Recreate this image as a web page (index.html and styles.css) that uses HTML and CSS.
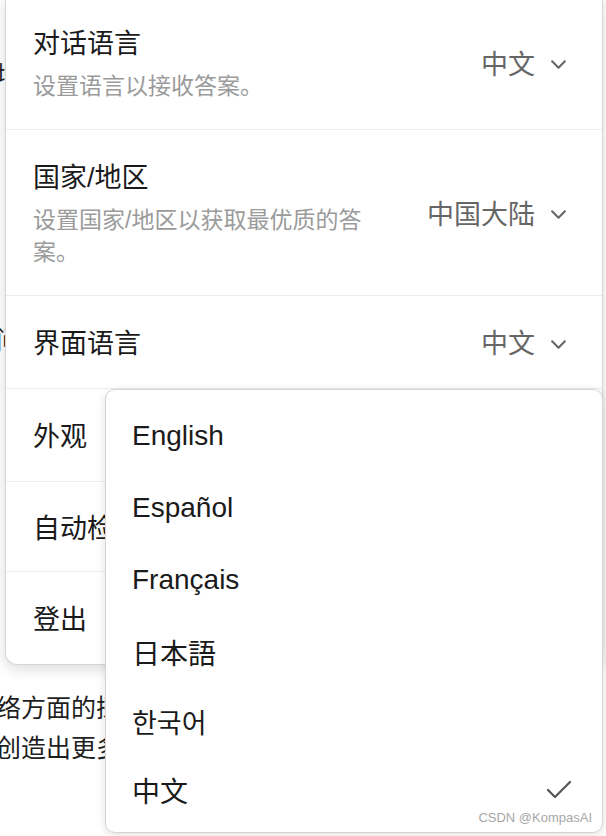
FILE: index.html
```html
<!DOCTYPE html>
<html lang="zh-CN">
<head>
    <meta charset="UTF-8">
    <title>设置</title>
    <link rel="stylesheet" href="styles.css">
</head>
<body>
    <div class="page">
        <div class="article">
            <p class="frag frag-top">增</p>
            <p class="frag frag-mid">问</p>
            <p class="lines">络方面的探索和研究，<br>创造出更多更好的内容。</p>
        </div>

        <div class="settings">
            <div class="row">
                <div class="row-text">
                    <div class="row-title">对话语言</div>
                    <div class="row-desc">设置语言以接收答案。</div>
                </div>
                <div class="row-value">中文
                    <svg class="chevron" viewBox="0 0 16 10"><path d="M2 2l6 6 6-6"/></svg>
                </div>
            </div>
            <div class="row">
                <div class="row-text">
                    <div class="row-title">国家/地区</div>
                    <div class="row-desc">设置国家/地区以获取最优质的答案。</div>
                </div>
                <div class="row-value">中国大陆
                    <svg class="chevron" viewBox="0 0 16 10"><path d="M2 2l6 6 6-6"/></svg>
                </div>
            </div>
            <div class="row">
                <div class="row-text">
                    <div class="row-title">界面语言</div>
                </div>
                <div class="row-value">中文
                    <svg class="chevron" viewBox="0 0 16 10"><path d="M2 2l6 6 6-6"/></svg>
                </div>
            </div>
            <div class="row">
                <div class="row-text">
                    <div class="row-title">外观</div>
                </div>
            </div>
            <div class="row row-short">
                <div class="row-text">
                    <div class="row-title">自动检测</div>
                </div>
            </div>
            <div class="row">
                <div class="row-text">
                    <div class="row-title">登出</div>
                </div>
            </div>
        </div>

        <div class="menu">
            <div class="menu-item" lang="en">English</div>
            <div class="menu-item" lang="es">Español</div>
            <div class="menu-item" lang="fr">Français</div>
            <div class="menu-item" lang="ja">日本語</div>
            <div class="menu-item korean" lang="ko">한국어</div>
            <div class="menu-item" lang="zh-CN">中文
                <svg class="check" viewBox="0 0 26 20"><path d="M2 10l7 7L24 2"/></svg>
            </div>
            <div class="watermark">CSDN @KompasAI</div>
        </div>
    </div>
</body>
</html>
```

FILE: styles.css
```css
body {
    margin: 0;
    font-family: "Liberation Sans", "Noto Sans CJK SC", sans-serif;
    color: #1f1f1f;
    background: #fff;
}
.page {
    position: relative;
    width: 606px;
    height: 836px;
    overflow: hidden;
}
.article {
    margin-left: -4px;
    font-size: 25px;
}
.frag {
    margin: 0;
    line-height: 36px;
}
.frag-top {
    padding-top: 57px;
}
.frag-mid {
    padding-top: 229px;
}
.lines {
    margin: 0;
    padding-top: 330px;
    line-height: 40px;
}

/* settings panel, sits on top of the article */
.settings {
    position: absolute;
    top: -4px;
    left: 5px;
    width: 596px;
    background: #fff;
    border: 1px solid #d6d6d6;
    border-top: none;
    border-radius: 0 0 12px 12px;
    box-shadow: 0 4px 14px rgba(0,0,0,0.14);
}
.row {
    display: flex;
    align-items: center;
    justify-content: space-between;
    padding: 31px 35px 27px 27px;
    border-bottom: 1px solid #ececec;
}
.row:last-child {
    border-bottom: none;
}
.row-short {
    padding-top: 30px;
    padding-bottom: 25px;
}
.row-text {
    max-width: 360px;
}
.row-title {
    font-size: 27px;
    line-height: 34px;
    color: #1a1a1a;
}
.row-desc {
    margin-top: 9px;
    font-size: 23px;
    line-height: 32px;
    color: #9b9b9b;
}
.row-value {
    display: flex;
    align-items: center;
    gap: 15px;
    font-size: 27px;
    line-height: 34px;
    color: #666;
    white-space: nowrap;
}
.chevron {
    width: 17px;
    height: 11px;
    fill: none;
    stroke: #666;
    stroke-width: 2;
    stroke-linecap: round;
    stroke-linejoin: round;
}

/* language dropdown */
.menu {
    position: absolute;
    top: 389px;
    left: 105px;
    width: 496px;
    height: 432px;
    padding-top: 10px;
    background: #fff;
    border: 1px solid #d4d4d4;
    border-radius: 10px;
    box-shadow: 0 2px 10px rgba(0,0,0,0.12);
}
.menu-item {
    display: flex;
    align-items: center;
    justify-content: space-between;
    height: 72px;
    padding: 0 30px 0 26px;
    font-size: 28px;
    color: #1a1a1a;
}
.korean {
    height: 66px;
    font-family: "Noto Sans CJK KR", sans-serif;
    font-size: 27px;
}
.check {
    width: 26px;
    height: 20px;
    fill: none;
    stroke: #555;
    stroke-width: 2.2;
    stroke-linecap: round;
    stroke-linejoin: round;
}
.watermark {
    position: absolute;
    right: 10px;
    bottom: 6px;
    font-size: 13px;
    line-height: 16px;
    color: #a8a8a8;
}
```
